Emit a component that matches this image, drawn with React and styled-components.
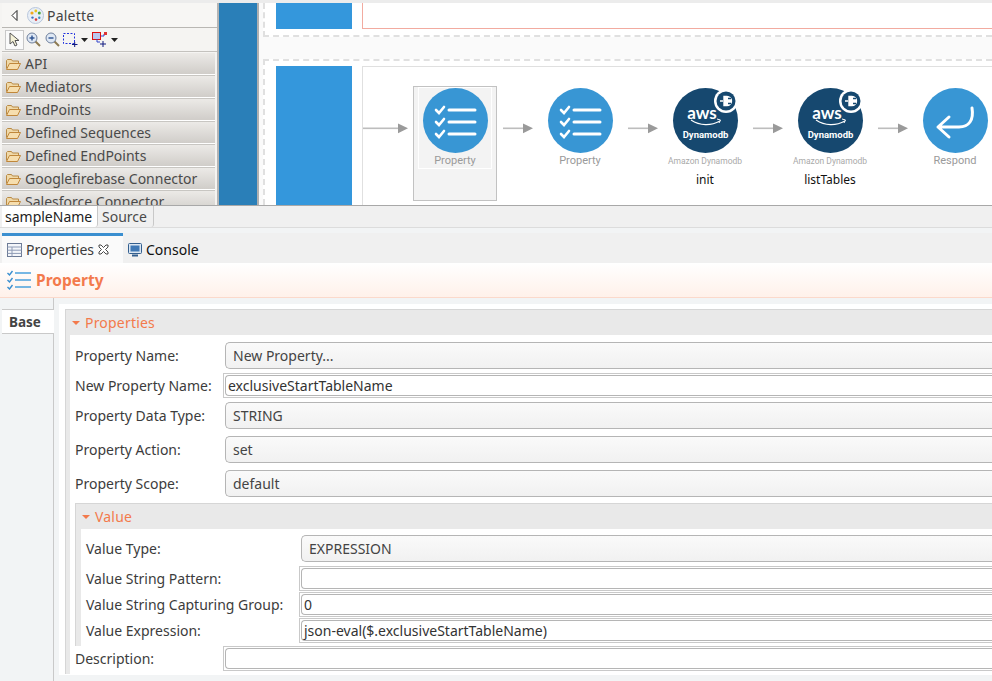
import React from 'react'
import styled, { createGlobalStyle } from 'styled-components'

const Global = createGlobalStyle`
  html, body { margin: 0; padding: 0; background: #f2f4f5; }
  * { box-sizing: border-box; }
`

const UI = '"Noto Sans", "Open Sans", sans-serif'
const BLUE = '#3896d4'
const NAVY = '#16486f'
const ORANGE = '#f37a4c'

const Page = styled.div`
  width: 992px;
  height: 681px;
  overflow: hidden;
  display: flex;
  flex-direction: column;
  font-family: ${UI};
  font-size: 14px;
  color: #3c3c3c;
  background: #f2f4f5;
`

/* editor: palette + canvas */
const Editor = styled.div`
  height: 206px;
  flex: none;
  display: flex;
  padding-top: 3px;
  background: #ececec;
  border-bottom: 1px solid #a8a8a8;
  overflow: hidden;
`
const Palette = styled.div`
  width: 217px;
  flex: none;
  padding-left: 2px;
  background: #f5f4f2;
  display: flex;
  flex-direction: column;
  overflow: hidden;
`
const PaletteHead = styled.div`
  height: 25px;
  flex: none;
  display: flex;
  align-items: center;
  padding-left: 9px;
  gap: 9px;
  border-bottom: 1px solid #b9b7b3;
  background: #f7f6f4;
`
const PaletteTitle = styled.span`
  font-size: 14px;
  letter-spacing: 0.2px;
  margin-left: -6px;
  color: #444;
`
const PaletteTools = styled.div`
  height: 24px;
  flex: none;
  display: flex;
  align-items: center;
  padding-left: 3px;
  border-bottom: 1px solid #c4c2be;
`
const ToolButton = styled.span`
  display: flex;
  width: ${p => p.$w || 19}px;
  height: 20px;
  align-items: center;
  justify-content: center;
  ${p => p.$active && 'background: #fafafa; border: 1px solid #c8c8c8;'}
`
const Drawer = styled.div`
  height: 22px;
  margin-bottom: 1px;
  flex: none;
  display: flex;
  align-items: center;
  gap: 3px;
  padding-left: 3px;
  color: #4a4a4a;
  font-size: 14px;
  white-space: nowrap;
  background: linear-gradient(#eceae7, #d0cdc9);
  border-bottom: 1px solid #fff;
  box-shadow: 0 1px 0 #c8c6c2;
`
const DrawerList = styled.div`
  padding-top: 1px;
  margin-right: 2px;
`

const SideRail = styled.div`
  width: 42px;
  flex: none;
  background: ${'#2a7fb8'};
  border-left: 2px solid #b4b4b4;
  border-right: 2px solid #b0b0b0;
`
const Canvas = styled.div`
  flex: 1;
  min-width: 0;
  background: #fafafa;
  display: flex;
  flex-direction: column;
  gap: 22px;
  padding-left: 4px;
`
const Sequence = styled.div`
  flex: none;
  display: flex;
  gap: 10px;
  background: #fff;
  padding: ${p => (p.$top ? '0 0 6px 11px' : '5px 0 0 11px')};
  height: ${p => (p.$top ? 34 : 146)}px;
  border-left: 2px dashed #e0e0e0;
  ${p => (p.$top ? 'border-bottom' : 'border-top')}: 2px dashed #e0e0e0;
`
const SeqHandle = styled.div`
  width: 76px;
  flex: none;
  background: #3497dc;
`
const SeqBody = styled.div`
  flex: 1;
  min-width: 0;
  background: #fff;
  display: flex;
  align-items: flex-start;
  padding-top: 19px;
  ${p =>
    p.$top
      ? 'border-left: 1px solid #f2aba0; border-bottom: 1px solid #f2aba0;'
      : 'border-left: 1px solid #e0e0e0; border-top: 1px solid #e0e0e0;'}
`
const Arrow = styled.svg`
  flex: none;
  margin: 37px ${p => p.$mr}px 0 ${p => p.$ml}px;
`
const Node = styled.div`
  width: 84px;
  height: 115px;
  flex: none;
  display: flex;
  flex-direction: column;
  align-items: center;
  padding-top: 1px;
  border: 1px solid ${p => (p.$selected ? '#c2c2c2' : 'transparent')};
  background: ${p => (p.$selected ? '#f3f3f3' : 'transparent')};
`
const NodeInner = styled.div`
  width: 72px;
  height: 80px;
  display: flex;
  flex-direction: column;
  align-items: center;
  ${p => p.$selected && 'outline: 1px solid #fff;'}
`
const Badge = styled.svg`
  flex: none;
  overflow: visible;
  display: block;
`
const NodeName = styled.span`
  font-family: Roboto, sans-serif;
  font-size: 11px;
  line-height: 13px;
  margin-top: 1px;
  color: #9a9a9a;
  white-space: nowrap;
`
const NodeVendor = styled.span`
  font-family: Roboto, sans-serif;
  font-size: 8.5px;
  line-height: 11px;
  margin-top: 3px;
  color: #a9a9a9;
  white-space: nowrap;
`
const NodeCaption = styled.span`
  font-size: 12px;
  line-height: 16px;
  margin-top: 5px;
  color: #111;
  white-space: nowrap;
`

/* editor tabs */
const EditorTabs = styled.div`
  height: 22px;
  flex: none;
  display: flex;
  align-items: stretch;
  padding-left: 2px;
  background: #f0f0f0;
  border-bottom: 1px solid #dcdcdc;
`
const EditorTab = styled.div`
  display: flex;
  align-items: center;
  padding: 0 ${p => (p.$active ? 3 : 4)}px;
  width: ${p => p.$w}px;
  font-size: 14px;
  color: ${p => (p.$active ? '#222' : '#4a4a4a')};
  background: ${p => (p.$active ? '#fff' : '#f0f0f0')};
  border-right: 1px solid #c8c8c8;
  border-bottom-right-radius: 3px;
`

/* properties view */
const ViewTabs = styled.div`
  height: 30px;
  margin-top: 5px;
  flex: none;
  display: flex;
  align-items: stretch;
  padding-left: 2px;
  background: #f0f0f0;
`
const ViewTab = styled.div`
  display: flex;
  align-items: center;
  gap: 4px;
  padding: 0 5px;
  width: ${p => p.$w}px;
  font-size: 14px;
  color: ${p => (p.$active ? '#3c3c3c' : '#111')};
  background: ${p => (p.$active ? '#fafafa' : 'transparent')};
  border-top: 3px solid ${p => (p.$active ? '#3a8fd0' : 'transparent')};
`
const FormHeader = styled.div`
  height: 35px;
  flex: none;
  display: flex;
  align-items: center;
  gap: 5px;
  padding-left: 7px;
  background: linear-gradient(#ffffff, #fff1ea);
  border-bottom: 1px solid #fbd9cb;
`
const FormTitle = styled.span`
  font-size: 15.5px;
  font-weight: 700;
  color: ${ORANGE};
`
const FormBody = styled.div`
  flex: 1;
  min-height: 0;
  display: flex;
`
const SideTabs = styled.div`
  width: 54px;
  flex: none;
  padding-top: 11px;
  padding-left: 2px;
  border-right: 1px solid #c9c9c9;
`
const SideTab = styled.div`
  height: 25px;
  width: 52px;
  margin-right: -1px;
  padding-left: 7px;
  display: flex;
  align-items: center;
  font-size: 13.5px;
  font-weight: 700;
  color: #444;
  background: #fff;
  border-top: 1px solid #c9c9c9;
  border-bottom: 1px solid #c9c9c9;
`
const SheetWrap = styled.div`
  flex: 1;
  min-width: 0;
  padding: 6px 0 6px 5px;
`
const Sheet = styled.div`
  height: 100%;
  background: #fff;
  padding: 5px 0 0 6px;
`
const Section = styled.div`
  background: #e9e9e9;
  border: 1px solid #d6d6d6;
  border-width: 1px 0 0 1px;
  padding-left: ${p => (p.$inner ? 5 : 4)}px;
`
const SectionHead = styled.div`
  height: 25px;
  margin-left: ${p => (p.$inner ? -5 : -4)}px;
  display: flex;
  align-items: center;
  gap: 5px;
  padding-left: 6px;
  font-size: 14px;
  letter-spacing: 0.2px;
  color: ${ORANGE};
`
const Caret = styled.span`
  width: 0;
  height: 0;
  border: 4px solid transparent;
  border-top: 4px solid ${ORANGE};
  border-bottom: 0;
`
const SectionBody = styled.div`
  background: #fff;
  padding: ${p => (p.$inner ? '6px 0 3px 5px' : '7px 0 3px 5px')};
`
const Row = styled.div`
  display: flex;
  align-items: center;
  height: ${p => p.$h || 27}px;
  margin-bottom: ${p => p.$mb || 0}px;
`
const Label = styled.span`
  flex: none;
  width: ${p => p.$w}px;
  font-size: 14px;
  color: #3c3c3c;
  white-space: nowrap;
`
const Combo = styled.div`
  flex: 1;
  height: 27px;
  display: flex;
  align-items: center;
  padding-left: 7px;
  font-size: 14px;
  color: #444;
  background: linear-gradient(#fafafa, #f1f1f1);
  border: 1px solid #b5b5b5;
  border-right: 0;
  border-radius: 5px 0 0 5px;
`
const InputFrame = styled.div`
  flex: 1;
  height: 25px;
  padding: 1px 0 1px 1px;
  border: 1px solid #c9c9c9;
  border-right: 0;
`
const InputBox = styled.div`
  height: 100%;
  display: flex;
  align-items: center;
  padding-left: 2px;
  font-size: 14px;
  color: #333;
  background: #fff;
  border: 1px solid #b5b5b5;
  border-right: 0;
  border-radius: 4px 0 0 4px;
`

const Input = ({ children }) => (
  <InputFrame>
    <InputBox>{children}</InputBox>
  </InputFrame>
)

const Folder = () => (
  <svg width="17" height="14" viewBox="0 0 17 14">
    <path d="M1.5 11.5V3.5l1-1h4l1 1.5h6v2" fill="#f0d9a8" stroke="#b98a45" />
    <path d="M1.5 12.5l3-6h11l-3 6z" fill="#f6deae" stroke="#c0873a" />
  </svg>
)

const PaletteLogo = () => (
  <svg width="17" height="17" viewBox="0 0 17 17">
    <circle cx="8.5" cy="8.5" r="8" fill="#e8eef6" stroke="#b7c6dc" />
    <circle cx="5" cy="6" r="1.6" fill="#f2a81d" />
    <circle cx="8.8" cy="4" r="1.4" fill="#e8c51e" />
    <circle cx="12.3" cy="6" r="1.5" fill="#49a53a" />
    <circle cx="5.5" cy="10.6" r="1.2" fill="#3e6fc4" />
    <circle cx="9" cy="12.6" r="1.3" fill="#d63c3c" />
    <circle cx="12.3" cy="10.8" r="1.2" fill="#3e8fc4" />
  </svg>
)

const Magnifier = ({ plus }) => (
  <svg width="15" height="15" viewBox="0 0 15 15">
    <path d="M9 9l5 5" stroke="#8d7a52" strokeWidth="2" />
    <circle cx="6" cy="6" r="5" fill="#dfe8f4" stroke="#6e7f9c" />
    <path d="M3.5 6h5" stroke="#2a4f8f" strokeWidth="1.4" />
    {plus && <path d="M6 3.5v5" stroke="#2a4f8f" strokeWidth="1.4" />}
  </svg>
)

const SmallDrop = () => (
  <svg width="7" height="4" viewBox="0 0 7 4">
    <path d="M0 0h7L3.5 4z" fill="#222" />
  </svg>
)

const FlowArrow = ({ len, ml, mr, h = 11 }) => (
  <Arrow width={len} height={h} viewBox={`0 0 ${len} ${h}`} $ml={ml} $mr={mr}>
    <rect x="0" y="4.5" width={len - 8} height="1.6" fill="#bdbdbd" />
    <path d={`M${len - 10} 0.5L${len} 5.3L${len - 10} 10.2z`} fill="#9a9a9a" />
  </Arrow>
)

const CheckRows = [22, 34, 46]

const PropertyBadge = () => (
  <Badge width="65" height="65" viewBox="0 0 65 65">
    <circle cx="32.5" cy="32.5" r="32.5" fill={BLUE} />
    {CheckRows.map(y => (
      <g key={y} fill="none" stroke="#fff" strokeLinecap="round">
        <path d={`M13 ${y}l3 3 5-6`} strokeWidth="2.6" />
        <path d={`M26 ${y}h26`} strokeWidth="3" />
      </g>
    ))}
  </Badge>
)

const DynamoBadge = () => (
  <Badge width="65" height="65" viewBox="0 0 65 65">
    <circle cx="32.5" cy="32.5" r="32.5" fill={NAVY} />
    <text x="29" y="31" textAnchor="middle" fontFamily="Lato, sans-serif" fontSize="17" fontWeight="700" fill="#fff">aws</text>
    <path d="M18 32c9 6 20 6 29 1" fill="none" stroke="#fff" strokeWidth="1.2" />
    <path d="M44 31l3.5 1-1.5 3" fill="none" stroke="#fff" strokeWidth="1" />
    <text x="32.5" y="50" textAnchor="middle" fontFamily="Roboto, sans-serif" fontSize="9.5" fontWeight="700" fill="#fff">Dynamodb</text>
    <circle cx="53" cy="13" r="12" fill="#fff" />
    <circle cx="53" cy="13" r="9.5" fill={NAVY} />
    <path d="M47 13h3M51 8.5h3a4.5 4.5 0 0 1 0 9h-3z" fill="#fff" stroke="#fff" strokeWidth="1.4" />
    <path d="M55 10.5h3M55 15.5h3" stroke={NAVY} strokeWidth="1.4" />
  </Badge>
)

const RespondBadge = () => (
  <Badge width="65" height="65" viewBox="0 0 65 65">
    <circle cx="32.5" cy="32.5" r="32.5" fill={BLUE} />
    <path
      d="M49 20c2 12-3 19-13 19H15M26 29L15 39l11 10"
      fill="none"
      stroke="#fff"
      strokeWidth="3"
      strokeLinecap="round"
      strokeLinejoin="round"
    />
  </Badge>
)

const TableIcon = () => (
  <svg width="15" height="14" viewBox="0 0 15 14">
    <rect x="0.5" y="0.5" width="14" height="13" fill="#f4f6fa" stroke="#6d7b96" />
    <path d="M0.5 4h14M0.5 7.2h14M0.5 10.4h14M5 4v9.5" stroke="#8f9cb6" />
  </svg>
)

const CloseIcon = () => (
  <svg width="11" height="11" viewBox="0 0 11 11">
    <path d="M1 1h2l2.5 2.5L8 1h2v2L7.5 5.5 10 8v2H8L5.5 7.5 3 10H1V8l2.5-2.5L1 3z" fill="#fff" stroke="#333" strokeWidth="0.9" />
  </svg>
)

const ConsoleIcon = () => (
  <svg width="14" height="14" viewBox="0 0 14 14">
    <rect x="0.5" y="0.5" width="13" height="10" rx="1" fill="#dbe6f2" stroke="#335f8f" />
    <rect x="2.5" y="2.5" width="9" height="6" fill="#3f78b5" />
    <path d="M4 12.5h6" stroke="#335f8f" strokeWidth="2" />
  </svg>
)

const HeaderIcon = () => (
  <svg width="24" height="20" viewBox="0 0 24 20">
    {[3, 10, 17].map(y => (
      <g key={y} fill="none">
        <path d={`M0.5 ${y}l2 2 3-4`} stroke="#3a8fd0" strokeWidth="1.4" />
        <path d={`M8 ${y}h16`} stroke="#4aa0dc" strokeWidth="1.5" />
      </g>
    ))}
  </svg>
)

const palette = [
  'API',
  'Mediators',
  'EndPoints',
  'Defined Sequences',
  'Defined EndPoints',
  'Googlefirebase Connector',
  'Salesforce Connector'
]

export default function App() {
  return (
    <Page>
      <Global />
      <Editor>
        <Palette>
          <PaletteHead>
            <svg width="7" height="11" viewBox="0 0 7 11">
              <path d="M6 0.5v10L1 5.5z" fill="#fff" stroke="#222" />
            </svg>
            <PaletteLogo />
            <PaletteTitle>Palette</PaletteTitle>
          </PaletteHead>
          <PaletteTools>
            <ToolButton $active>
              <svg width="11" height="15" viewBox="0 0 11 15">
                <path d="M1 1v11l3-2.5 2 4.5 2-1-2-4.500h4z" fill="#f5f2d8" stroke="#555" />
              </svg>
            </ToolButton>
            <ToolButton><Magnifier plus /></ToolButton>
            <ToolButton><Magnifier /></ToolButton>
            <ToolButton $w={17}>
              <svg width="15" height="14" viewBox="0 0 15 14">
                <rect x="0.5" y="0.5" width="11" height="10" fill="none" stroke="#2233dd" strokeDasharray="2 1.500" />
                <path d="M9 11.500h5.500M11.700 9v5" stroke="#111a80" />
              </svg>
            </ToolButton>
            <ToolButton $w={11}><SmallDrop /></ToolButton>
            <ToolButton $w={19}>
              <svg width="16" height="15" viewBox="0 0 16 15">
                <rect x="0.5" y="0.500" width="8" height="7" fill="#b9c8ef" stroke="#dd1111" />
                <path d="M9 4h3v-2M5 7v3h3" fill="none" stroke="#3344cc" />
                <rect x="12" y="0" width="3" height="3" fill="#dd3333" />
                <path d="M8 12h6M11 9v6" stroke="#111a80" />
              </svg>
            </ToolButton>
            <ToolButton $w={11}><SmallDrop /></ToolButton>
          </PaletteTools>
          <DrawerList>
            {palette.map(name => (
              <Drawer key={name}>
                <Folder />
                {name}
              </Drawer>
            ))}
          </DrawerList>
        </Palette>
        <SideRail />
        <Canvas>
          <Sequence $top>
            <SeqHandle />
            <SeqBody $top />
          </Sequence>
          <Sequence>
            <SeqHandle />
            <SeqBody>
              <FlowArrow len={45} ml={0} mr={5} />
              <Node $selected>
                <NodeInner $selected>
                  <PropertyBadge />
                  <NodeName>Property</NodeName>
                </NodeInner>
              </Node>
              <FlowArrow len={30} ml={6} mr={5} />
              <Node>
                <NodeInner>
                  <PropertyBadge />
                  <NodeName>Property</NodeName>
                </NodeInner>
              </Node>
              <FlowArrow len={30} ml={6} mr={5} />
              <Node>
                <NodeInner>
                  <DynamoBadge />
                  <NodeVendor>Amazon Dynamodb</NodeVendor>
                  <NodeCaption>init</NodeCaption>
                </NodeInner>
              </Node>
              <FlowArrow len={30} ml={6} mr={5} />
              <Node>
                <NodeInner>
                  <DynamoBadge />
                  <NodeVendor>Amazon Dynamodb</NodeVendor>
                  <NodeCaption>listTables</NodeCaption>
                </NodeInner>
              </Node>
              <FlowArrow len={30} ml={6} mr={5} />
              <Node>
                <NodeInner>
                  <RespondBadge />
                  <NodeName>Respond</NodeName>
                </NodeInner>
              </Node>
            </SeqBody>
          </Sequence>
        </Canvas>
      </Editor>

      <EditorTabs>
        <EditorTab $active $w={96}>sampleName</EditorTab>
        <EditorTab $w={56}>Source</EditorTab>
      </EditorTabs>

      <ViewTabs>
        <ViewTab $active $w={121}>
          <TableIcon />
          Properties
          <CloseIcon />
        </ViewTab>
        <ViewTab $w={90}>
          <ConsoleIcon />
          Console
        </ViewTab>
      </ViewTabs>

      <FormHeader>
        <HeaderIcon />
        <FormTitle>Property</FormTitle>
      </FormHeader>

      <FormBody>
        <SideTabs>
          <SideTab>Base</SideTab>
        </SideTabs>
        <SheetWrap>
          <Sheet>
            <Section>
              <SectionHead><Caret />Properties</SectionHead>
              <SectionBody>
                <Row $mb={4}><Label $w={150}>Property Name:</Label><Combo>New Property...</Combo></Row>
                <Row $h={25} $mb={4}><Label $w={148}>New Property Name:</Label><Input>exclusiveStartTableName</Input></Row>
                <Row $mb={7}><Label $w={150}>Property Data Type:</Label><Combo>STRING</Combo></Row>
                <Row $mb={7}><Label $w={150}>Property Action:</Label><Combo>set</Combo></Row>
                <Row $mb={6}><Label $w={150}>Property Scope:</Label><Combo>default</Combo></Row>
                <Section $inner>
                  <SectionHead $inner><Caret />Value</SectionHead>
                  <SectionBody $inner>
                    <Row $mb={4}><Label $w={215}>Value Type:</Label><Combo>EXPRESSION</Combo></Row>
                    <Row $h={25} $mb={1}><Label $w={213}>Value String Pattern:</Label><Input /></Row>
                    <Row $h={25} $mb={1}><Label $w={213}>Value String Capturing Group:</Label><Input>0</Input></Row>
                    <Row $h={25}><Label $w={213}>Value Expression:</Label><Input>json-eval($.exclusiveStartTableName)</Input></Row>
                  </SectionBody>
                </Section>
                <Row $h={25}><Label $w={148}>Description:</Label><Input /></Row>
              </SectionBody>
            </Section>
          </Sheet>
        </SheetWrap>
      </FormBody>
    </Page>
  )
}
